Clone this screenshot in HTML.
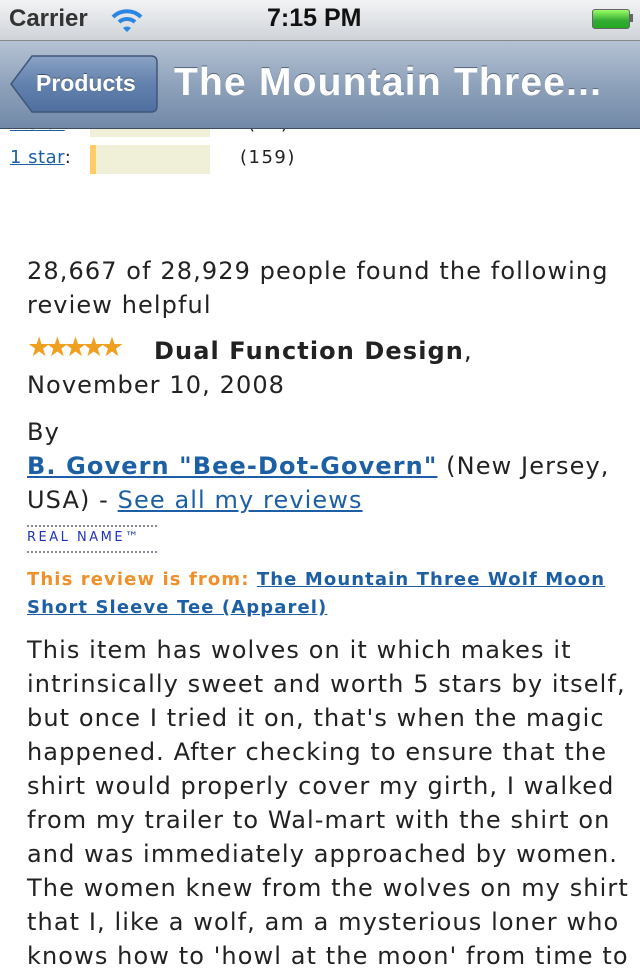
<!DOCTYPE html>
<html><head><meta charset="utf-8"><style>
*{margin:0;padding:0}
body{width:640px;height:960px;overflow:hidden;background:#fff;position:relative;font-family:"DejaVu Sans",Verdana,sans-serif;color:#222}
.l{position:absolute;left:27px;white-space:nowrap;font-size:24px;letter-spacing:1.1px;line-height:34px}
a{color:#1d5fa5;text-decoration:underline}
#sb{position:absolute;left:0;top:0;width:640px;height:40px;background:linear-gradient(#f2f3f5,#cfd3d8);border-bottom:1px solid #888;font-family:"Liberation Sans",sans-serif;font-weight:bold}
#nav{position:absolute;left:0;top:41px;width:640px;height:87px;background:linear-gradient(#b5c2d3,#8fa2bb 50%,#7189a8);border-bottom:1px solid #3d4c60;font-family:"Liberation Sans",sans-serif}
</style></head><body>
<div id="sb">
<div style="position:absolute;left:9px;top:5px;font-size:24px;color:#333">Carrier</div>
<svg style="position:absolute;left:110px;top:7px" width="34" height="26" viewBox="0 0 34 26"><path d="M3 10 A20 20 0 0 1 31 10" stroke="#2a86e0" stroke-width="4" fill="none"/><path d="M9 15 A12 12 0 0 1 25 15" stroke="#2a86e0" stroke-width="4" fill="none"/><path d="M13 21 L17 25 L21 21 A6 6 0 0 0 13 21Z" fill="#2a86e0"/></svg>
<div style="position:absolute;left:267px;top:4px;font-size:25px;color:#111">7:15 PM</div>
<div style="position:absolute;left:592px;top:9px;width:36px;height:18px;border:1px solid #666;border-radius:3px;background:linear-gradient(#9f6,#3a3 60%,#2a2)"></div>
<div style="position:absolute;left:630px;top:14px;width:3px;height:8px;background:#666"></div>
</div>
<div id="nav">
<svg style="position:absolute;left:9px;top:13px" width="150" height="60" viewBox="0 0 150 60"><defs><linearGradient id="g" x1="0" y1="0" x2="0" y2="1"><stop offset="0" stop-color="#8aa2c4"/><stop offset=".5" stop-color="#6381ad"/><stop offset="1" stop-color="#4f6f9f"/></linearGradient></defs><path d="M2 30 L23 2 L142 2 Q148 2 148 8 L148 52 Q148 58 142 58 L23 58 Z" fill="url(#g)" stroke="#3f5778" stroke-width="1.5"/></svg>
<div style="position:absolute;left:36px;top:29px;font-size:23px;font-weight:bold;color:#fff;text-shadow:0 -1px 0 #456">Products</div>
<div style="position:absolute;left:174px;top:20px;font-size:39px;letter-spacing:1.2px;font-weight:bold;color:#fff;text-shadow:0 -1px 0 #567;white-space:nowrap">The Mountain Three...</div>
</div>
<div style="position:absolute;left:0;top:129px;width:640px;height:831px;overflow:hidden">
<div style="position:absolute;left:10px;top:-16px;font-size:18px;letter-spacing:.5px"><a>2 star</a>:</div>
<div style="position:absolute;left:90px;top:-6px;width:120px;height:14px;background:#f0f0d8"></div>
<div style="position:absolute;left:248px;top:-16px;font-size:18px;letter-spacing:1px">(42)</div>
<div style="position:absolute;left:10px;top:18px;font-size:18px;letter-spacing:.5px"><a>1 star</a>:</div>
<div style="position:absolute;left:90px;top:16px;width:120px;height:29px;background:#f0f0d8"></div>
<div style="position:absolute;left:90px;top:16px;width:6px;height:29px;background:#fc6"></div>
<div style="position:absolute;left:240px;top:18px;font-size:18px;letter-spacing:1.5px">(159)</div>
</div>
<div class="l" style="top:254px">28,667 of 28,929 people found the following</div>
<div class="l" style="top:288px">review helpful</div>
<div style="position:absolute;left:27px;top:333px;color:#f0a020;font-size:27px;letter-spacing:-6px;line-height:30px">★★★★★</div>
<div class="l" style="top:334px;left:154px"><b>Dual Function Design</b>,</div>
<div class="l" style="top:368px">November 10, 2008</div>
<div class="l" style="top:415px">By</div>
<div class="l" style="top:449px"><a><b>B. Govern "Bee-Dot-Govern"</b></a> (New Jersey,</div>
<div class="l" style="top:483px">USA) - <a>See all my reviews</a></div>
<div style="position:absolute;left:27px;top:525px;width:130px;height:24px;border-top:2px dotted #889;border-bottom:2px dotted #889;font-size:13px;letter-spacing:2.5px;color:#2233bb;line-height:22px;white-space:nowrap">REAL NAME™</div>
<div style="position:absolute;left:27px;top:566px;font-size:18px;letter-spacing:1.1px;font-weight:bold;line-height:28px;white-space:nowrap"><span style="color:#f0902a">This review is from: </span><a>The Mountain Three Wolf Moon</a><br><a>Short Sleeve Tee (Apparel)</a></div>
<div class="l" style="top:633px">This item has wolves on it which makes it</div>
<div class="l" style="top:667px">intrinsically sweet and worth 5 stars by itself,</div>
<div class="l" style="top:701px">but once I tried it on, that's when the magic</div>
<div class="l" style="top:735px">happened. After checking to ensure that the</div>
<div class="l" style="top:769px">shirt would properly cover my girth, I walked</div>
<div class="l" style="top:803px">from my trailer to Wal-mart with the shirt on</div>
<div class="l" style="top:837px">and was immediately approached by women.</div>
<div class="l" style="top:871px">The women knew from the wolves on my shirt</div>
<div class="l" style="top:905px">that I, like a wolf, am a mysterious loner who</div>
<div class="l" style="top:939px">knows how to 'howl at the moon' from time to</div>
</body></html>
